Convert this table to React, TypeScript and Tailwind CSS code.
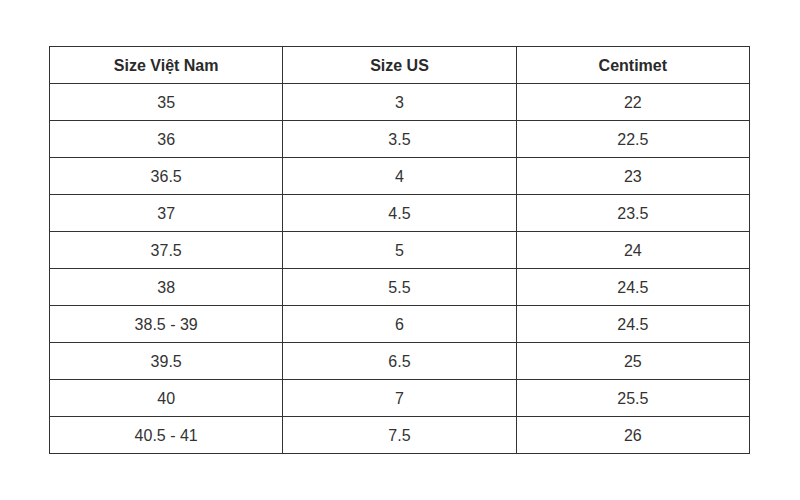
const rows: [string, string, string][] = [
  ["35", "3", "22"],
  ["36", "3.5", "22.5"],
  ["36.5", "4", "23"],
  ["37", "4.5", "23.5"],
  ["37.5", "5", "24"],
  ["38", "5.5", "24.5"],
  ["38.5 - 39", "6", "24.5"],
  ["39.5", "6.5", "25"],
  ["40", "7", "25.5"],
  ["40.5 - 41", "7.5", "26"],
];

export default function App() {
  return (
    <div
      className="w-[800px] h-[500px] bg-white pt-[46px] pl-[49px]"
      style={{ fontFamily: "'Liberation Sans', Arial, sans-serif" }}
    >
      <table className="w-[701px] border-collapse table-fixed text-[16px] text-[#2a2a2a]">
        <thead>
          <tr className="h-[37px]">
            <th className="border border-[#333] pt-px font-bold">Size Việt Nam</th>
            <th className="border border-[#333] pt-px font-bold">Size US</th>
            <th className="border border-[#333] pt-px font-bold">Centimet</th>
          </tr>
        </thead>
        <tbody>
          {rows.map((r, i) => (
            <tr key={i} className="h-[37px]">
              {r.map((c, j) => (
                <td key={j} className="border border-[#333] pt-px text-center font-normal text-[#333]">
                  {c}
                </td>
              ))}
            </tr>
          ))}
        </tbody>
      </table>
    </div>
  );
}
